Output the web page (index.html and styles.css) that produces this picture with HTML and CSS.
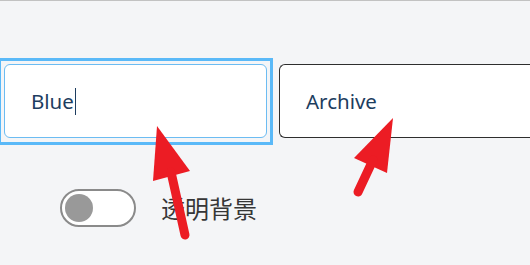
FILE: index.html
```html
<!DOCTYPE html>
<html>
<head>
<meta charset="utf-8">
<link rel="stylesheet" href="styles.css">
</head>
<body>
<div class="page">
  <div class="fields">
    <div class="focus-ring">
      <div class="field field-active"><span class="value">Blue</span><span class="caret"></span></div>
    </div>
    <div class="field field-dark"><span class="value">Archive</span></div>
  </div>
  <div class="option">
    <div class="toggle"><div class="knob"></div></div>
    <span class="option-label">透明背景</span>
  </div>
</div>
<svg class="annotations" width="530" height="265" viewBox="0 0 530 265">
  <polygon points="157,126 153,181 190,171" fill="#ec1c24"/>
  <line x1="171" y1="172" x2="185" y2="235" stroke="#ec1c24" stroke-width="9" stroke-linecap="round"/>
  <polygon points="393,118 354,158 387,173" fill="#ec1c24"/>
  <line x1="373" y1="160" x2="358" y2="192" stroke="#ec1c24" stroke-width="9" stroke-linecap="round"/>
</svg>
</body>
</html>
```
FILE: styles.css
```css
html, body {
  margin: 0;
  padding: 0;
}
body {
  width: 530px;
  height: 265px;
  overflow: hidden;
  background: #f4f5f7;
  border-top: 1px solid #c2c2c2;
  box-sizing: border-box;
  position: relative;
  font-family: "Noto Sans", "Noto Sans CJK SC", sans-serif;
}
.page {
  padding-top: 57px;
}
.fields {
  display: flex;
  align-items: flex-start;
  gap: 6px;
}
.focus-ring {
  flex: none;
  border: 3px solid #5ab9f8;
  border-left-width: 1px;
  padding: 3px 3px 4px 3px;
}
.field {
  box-sizing: border-box;
  height: 74px;
  border-radius: 6px;
  background: #ffffff;
  display: flex;
  align-items: center;
  padding-left: 26px;
  color: #1d3d60;
  font-size: 20.5px;
}
.field-active {
  flex: none;
  width: 263px;
  border: 1px solid #6cbcf2;
}
.field-dark {
  flex: 1;
  min-width: 0;
  margin-top: 6px;
  border: 1.5px solid #2e2e2e;
  border-right: none;
  border-radius: 6px 0 0 6px;
}
.value {
  line-height: 1;
}
.caret {
  display: inline-block;
  width: 0;
  height: 27px;
  border-left: 1.5px solid #1d3d60;
  margin-left: 1px;
}
.option {
  display: flex;
  align-items: center;
  margin-top: 44px;
  padding-left: 60px;
  gap: 25px;
}
.toggle {
  box-sizing: border-box;
  width: 76px;
  height: 38px;
  border: 2px solid #8a8a8a;
  border-radius: 19px;
  background: #ffffff;
  display: flex;
  align-items: center;
  padding-left: 3px;
}
.knob {
  width: 28px;
  height: 28px;
  border-radius: 50%;
  background: #999999;
}
.option-label {
  font-family: "Noto Sans CJK SC", sans-serif;
  font-size: 24px;
  color: #363636;
  line-height: 1;
}
.annotations {
  position: absolute;
  top: -1px;
  left: 0;
  pointer-events: none;
}
```
